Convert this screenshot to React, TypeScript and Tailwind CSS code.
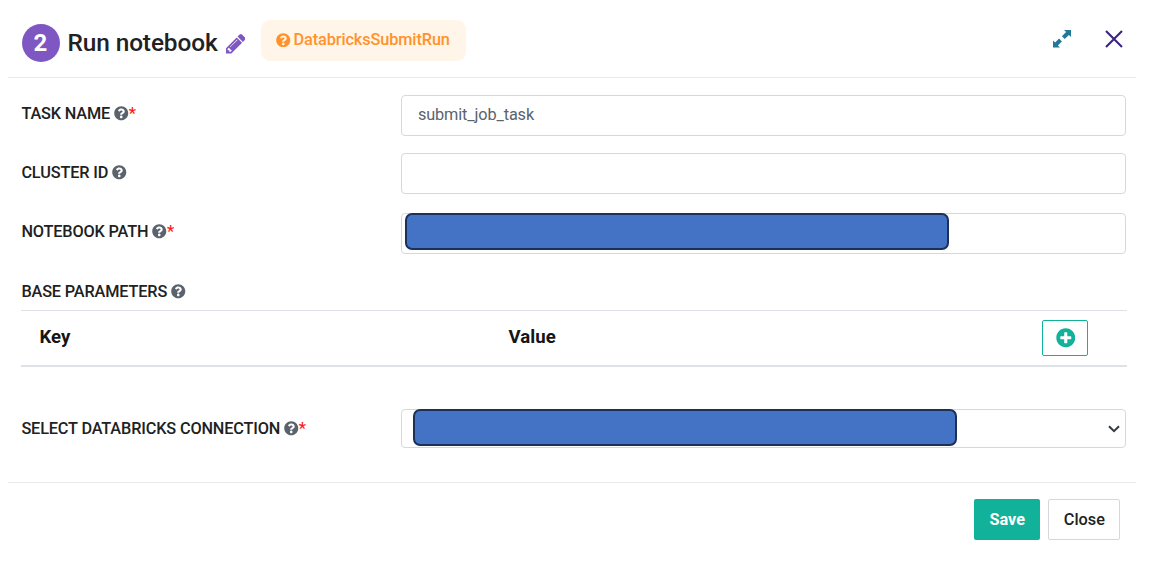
import type { ReactNode } from "react";
import { FaPlusCircle, FaQuestionCircle } from "react-icons/fa";

function Label({ text, required = false }: { text: string; required?: boolean }) {
  return (
    <label className="flex h-5 w-[380px] shrink-0 items-center text-[16.3px] leading-5 font-medium tracking-[-0.15px] whitespace-nowrap text-[#212121]">
      <span>{text}</span>
      <FaQuestionCircle className="-mt-px ml-1 size-[14.5px] text-[#5a636c]" />
      {required && <span className="font-medium text-[#ff1a1a]">*</span>}
    </label>
  );
}

function Field({ label, required, children }: { label: string; required?: boolean; children?: ReactNode }) {
  return (
    <div className="flex h-[41px]">
      <div className="pt-[9px]">
        <Label text={label} required={required} />
      </div>
      <div className="relative flex h-[41px] w-[725px] items-center rounded-[4px] border border-[#d5d9de] px-[15.5px] text-[16.3px] tracking-[-0.12px] text-[#5b636b]">
        {children}
      </div>
    </div>
  );
}

export default function App() {
  return (
    <main className="h-[564px] w-[1176px] overflow-hidden bg-white pl-2 font-['Roboto','Liberation_Sans',sans-serif] text-[#212121]">
      <header className="flex h-[78px] w-[1128px] items-start border-b border-[#e9ebed] pl-[13.5px]">
        <span className="mt-6 flex size-[38px] items-center justify-center rounded-full bg-[#7e57c2] text-[24px] leading-none font-bold text-white">
          2
        </span>
        <h1 className="mt-[27px] ml-2 w-[149.5px] text-[24.4px] leading-8 font-medium tracking-[-0.1px] whitespace-nowrap">
          Run notebook
        </h1>
        <svg viewBox="128 149 1515 1515" className="mt-[34px] ml-[8.5px] size-[19.5px] shrink-0" fill="#7e57c2">
          <path d="M491 1536l91-91-235-235-91 91v107h128v128h107zm523-928q0-22-22-22-10 0-17 7l-542 542q-7 7-7 17 0 22 22 22 10 0 17-7l542-542q7-7 7-17zm-54-192l416 416-832 832h-416v-416zm683 96q0 53-37 90l-166 166-416-416 166-165q36-38 90-38 53 0 91 38l235 234q37 39 37 91z" />
        </svg>
        <div className="mt-[19.5px] ml-[15.5px] flex h-[41px] w-[205px] items-center rounded-[9px] bg-[#fff5e8] pl-[15.5px] text-[16.3px] font-medium tracking-[-0.1px] whitespace-nowrap text-[#ff922b]">
          <FaQuestionCircle className="mr-[3px] size-[14.5px]" />
          <span>DatabricksSubmitRun</span>
        </div>
        <div className="mt-[30px] mr-[13px] ml-auto flex items-start gap-[34.5px]">
          <svg viewBox="0 0 18 18" className="size-[18px]" fill="#23789a">
            <path d="M11 0H18V7L15.9 4.9L11.7 9.1L8.9 6.3L13.1 2.1ZM7 17.5H0V10.5L2.1 12.6L6.1 8.6L8.9 11.4L4.9 15.4Z" />
          </svg>
          <svg viewBox="0 0 18 18" className="size-[18px]" fill="none" stroke="#3b2383" strokeWidth="2.1">
            <path d="M1 1L17 17M17 1L1 17" />
          </svg>
        </div>
      </header>

      <section className="h-[404px] w-[1128px] pt-[17px] pl-[13.4px]">
        <Field label="TASK NAME" required>
          <span className="-mt-px">submit_job_task</span>
        </Field>
        <div className="h-[17px]" />
        <div className="[&_label]:mt-px">
          <Field label="CLUSTER ID" />
        </div>
        <div className="h-[19px]" />
        <Field label="NOTEBOOK PATH" required>
          <div className="absolute top-[-1px] left-[3px] h-[37px] w-[544px] rounded-[7px] border-2 border-[#1b3157] bg-[#4472c4]" />
        </Field>
        <div className="pt-[28px]">
          <Label text="BASE PARAMETERS" />
        </div>
        <div className="mt-[8px] flex h-[57px] w-[1105.5px] items-start border-t border-b-2 border-[#dee2e6] text-[18.6px] font-bold tracking-[0.1px] text-[#151515]">
          <span className="mt-[14px] w-[469px] pl-[18px] leading-6">Key</span>
          <span className="mt-[14px] pl-[18px] leading-6">Value</span>
          <button className="mt-[9px] mr-[38.5px] ml-auto flex h-9 w-[46px] items-center justify-center rounded-[2px] border border-[#12b199]">
            <FaPlusCircle className="size-[19.5px] text-[#12b199]" />
          </button>
        </div>
        <div className="mt-[42px] flex">
          <div className="pt-[10px]">
            <Label text="SELECT DATABRICKS CONNECTION" required />
          </div>
          <div className="relative flex h-[39px] w-[725px] items-center justify-end rounded-[4px] border border-[#d5d9de] pr-[5px]">
            <div className="absolute top-[-1px] left-[11px] h-[37px] w-[544px] rounded-[7px] border-2 border-[#1b3157] bg-[#4472c4]" />
            <svg viewBox="0 0 12 8" className="h-2 w-3" fill="none" stroke="#343a40" strokeWidth="2">
              <path d="M1 1.2L6 6.2L11 1.2" />
            </svg>
          </div>
        </div>
      </section>

      <footer className="flex h-[82px] w-[1128px] justify-end gap-2 border-t border-[#e9ebed] pt-4 pr-[15.6px] text-[16.3px] font-medium">
        <button className="h-[41px] w-[66.5px] rounded-[2px] bg-[#12b199] pt-px font-bold text-white">Save</button>
        <button className="h-[41px] w-[72px] rounded-[2px] border border-[#d5d9de] bg-white pt-px">Close</button>
      </footer>
    </main>
  );
}
